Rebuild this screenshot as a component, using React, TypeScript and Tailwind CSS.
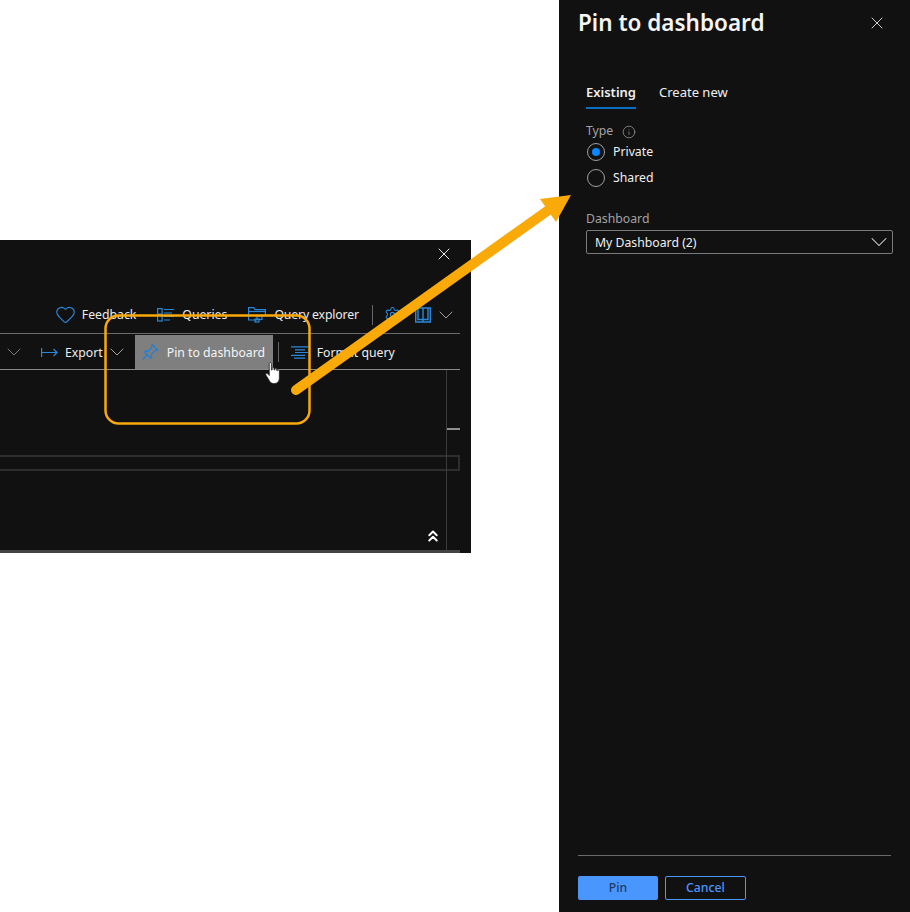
import { ChevronDown, ChevronsUp, Heart, Info, Settings, X } from "lucide-react"

const font = "font-['Noto_Sans','Open_Sans',sans-serif]"

const QueriesIcon = () => (
  <svg width="18" height="14" viewBox="0 0 18 14" fill="none" stroke="#2b88d8" strokeWidth="1.2">
    <rect x="0.6" y="0.6" width="4.5" height="5.5" />
    <rect x="0.6" y="7" width="4.5" height="6" />
    <path d="M7 1.5h10M7 5h8M7 8.500h10M7 12h6" />
  </svg>
)

const ExplorerIcon = () => (
  <svg width="18" height="16" viewBox="0 0 18 16" fill="none" stroke="#2b88d8" strokeWidth="1.2">
    <path d="M9 13H.6V.6h5l1.500 2h10.300v6" />
    <path d="M.6 4.500h16.800" />
    <rect x="9" y="9" width="5" height="3.500" />
    <rect x="7" y="12" width="4" height="3" />
  </svg>
)

const BookIcon = () => (
  <svg width="16" height="16" viewBox="0 0 16 16" fill="none" stroke="#2b88d8" strokeWidth="1.400">
    <path d="M.7 15V1h14.600v14zM8 1v14M3 1v11.500h10V1" />
  </svg>
)

const ExportIcon = () => (
  <svg width="17" height="9" viewBox="0 0 17 9" fill="none" stroke="#2b88d8" strokeWidth="1.200">
    <path d="M.6 0v9M1 4.500h15M12.500 1l3.600 3.500L12.500 8" />
  </svg>
)

const PinIcon = () => (
  <svg width="17" height="18" viewBox="0 0 17 18" fill="none" stroke="#2080d8" strokeWidth="1.300">
    <path d="M.8 16.800l4.700-5.300M10 1.500L15.500 7l-3 1-3 3v3l-1 1-6-6 1-1h3l3-3z" />
  </svg>
)

const FormatIcon = () => (
  <svg width="17" height="13" viewBox="0 0 17 13" fill="none" stroke="#2b88d8" strokeWidth="1.200">
    <path d="M0 .8h17M4 3.800h10M4 6.500h13M0 9.300h14M3 12.200h11" />
  </svg>
)

const HandCursor = () => (
  <svg width="17" height="23" viewBox="0 0 16 23" preserveAspectRatio="none" fill="#fff" stroke="#222" strokeWidth="0.800">
    <path d="M4 1.500c0-1.300 2-1.300 2 0V8l.8-.2V6.300c0-1 1.700-1 1.700 0v1.600l.8.100V7c0-1 1.700-1 1.700 0v1.500l.7.100c0-1 1.800-.9 1.800.2V16c0 3-1.500 5.500-4.500 5.500H8c-2 0-3-1-4-3L.8 13c-.7-1.300.9-2.300 1.800-1.200L4 13.500z" />
  </svg>
)

const Radio = ({ label, checked }: { label: string; checked?: boolean }) => (
  <label className="flex items-center gap-[8px] h-[26px] pl-px">
    <span className="w-[18px] h-[18px] rounded-full border border-[#a0a0a0] flex items-center justify-center">
      {checked && <span className="w-[8px] h-[8px] rounded-full bg-[#0a84ff]" />}
    </span>
    <span className="mt-[2px] text-[12.250px] text-[#f0f0f0]">{label}</span>
  </label>
)

const QueryWindow = () => (
  <div className={`relative w-[471px] h-[313px] bg-[#111111] text-white overflow-hidden flex flex-col ${font}`}>
    <div className="flex justify-end pt-[4px] pr-[17px] h-[60px]">
      <X size={20} strokeWidth={1.100} className="text-white" />
    </div>
    <div className="flex items-center justify-end h-[34px] w-[460px] pb-[4px] pr-[2px] text-[12.250px] text-[#ededed] border-b border-[#6a6a6a]">
      <Heart size={21} strokeWidth={1.300} className="text-[#2b88d8] mr-[6px]" />
      <span className="mr-[21px] mt-[2px]">Feedback</span>
      <QueriesIcon />
      <span className="ml-[7px] mr-[21px] mt-[2px]">Queries</span>
      <ExplorerIcon />
      <span className="ml-[8px] mr-[13px] mt-[2px] tracking-[-0.14px]">Query explorer</span>
      <span className="w-px h-[20px] bg-[#666] mr-[11px]" />
      <Settings size={17} strokeWidth={1.500} className="text-[#2b88d8] mr-[14px]" />
      <BookIcon />
      <ChevronDown size={24} strokeWidth={1} className="text-[#a0a0a0] ml-[3px]" />
    </div>
    <div className="flex items-center h-[36px] w-[460px] pt-px pl-[2px] text-[12.250px] text-[#ededed] border-b border-[#8a8a8a]">
      <ChevronDown size={24} strokeWidth={1} className="text-[#777]" />
      <span className="ml-[15px]"><ExportIcon /></span>
      <span className="ml-[7px] mt-[2px]">Export</span>
      <ChevronDown size={24} strokeWidth={1} className="text-[#a0a0a0] ml-[2px]" />
      <div className="flex items-center h-full w-[138px] ml-[6px] pl-[7px] bg-[#7f7f7f]">
        <PinIcon />
        <span className="ml-[8px] mt-[2px] text-[#f5f5f5] whitespace-nowrap">Pin to dashboard</span>
      </div>
      <span className="w-px h-[20px] bg-[#666] ml-[5px]" />
      <span className="ml-[12px]"><FormatIcon /></span>
      <span className="ml-[9px] mt-[2px]">Format query</span>
    </div>
    <div className="flex-1 flex flex-col relative w-[460px]">
      <div className="flex-1 relative pt-[58px]">
        <div className="ml-[446px] h-[2px] w-[14px] bg-[#8f8f8f]" />
        <div className="mt-[25px] h-[16px] border-2 border-[#2e2e2e] border-l-0" />
        <div className="absolute top-0 bottom-0 left-[446px] w-px bg-[#3c3c3c]" />
        <ChevronsUp size={18} strokeWidth={2.500} className="absolute left-[424px] top-[157px] text-white" />
      </div>
      <div className="h-[3px] bg-[#444]" />
    </div>
  </div>
)

const PinPanel = () => (
  <aside className={`w-[351px] h-[912px] shrink-0 bg-[#111111] text-white flex flex-col ${font}`}>
    <div className="flex items-center justify-between h-[46px] pl-[19px] pr-[23px]">
      <h1 className="text-[22.500px] font-semibold text-[#f5f5f5]">Pin to dashboard</h1>
      <X size={20} strokeWidth={1.100} className="text-[#e0e0e0]" />
    </div>
    <div className="flex-1 pl-[27px] pr-[17px]">
      <div className="flex gap-[23px] mt-[37px] text-[13px]">
        <span className="pb-[4px] font-semibold border-b-2 border-[#0a6fc2] text-[#f0f0f0]">Existing</span>
        <span className="text-[#f0f0f0]">Create new</span>
      </div>
      <div className="flex items-center gap-[9px] mt-[14px] h-[18px] text-[12.250px] text-[#a3a3a3]">
        Type
        <Info size={14} strokeWidth={1.200} />
      </div>
      <div className="-mt-[2px]">
        <Radio label="Private" checked />
        <Radio label="Shared" />
      </div>
      <div className="mt-[19px] text-[12.250px] text-[#a3a3a3]">Dashboard</div>
      <div className="mt-[2px] flex items-center justify-between h-[24px] pl-[8px] border border-[#7a7a7a] rounded-[2px] text-[12.250px] text-[#f0f0f0]">
        <span className="mt-[2px]">My Dashboard (2)</span>
        <ChevronDown size={28} strokeWidth={0.900} className="text-[#e0e0e0] -mr-px" />
      </div>
    </div>
    <div className="mx-[19px] mb-[12px] pt-[20px] border-t border-[#6a6a6a] flex gap-[7px] text-[12.250px] font-medium">
      <button className="w-[80px] h-[24px] rounded-[2px] bg-[#4a96ff] text-[#1f3a66]">Pin</button>
      <button className="w-[81px] h-[24px] rounded-[2px] border border-[#4a96ff] text-[#4a96ff]">Cancel</button>
    </div>
  </aside>
)

const Callout = () => (
  <svg className="absolute inset-0 pointer-events-none" width="910" height="912" viewBox="0 0 910 912" fill="none">
    <rect x="105.500" y="315.500" width="204" height="108" rx="13" stroke="#f9a90a" strokeWidth="2.500" />
    <path d="M296 390L550 209" stroke="#f9aa08" strokeWidth="10" strokeLinecap="round" />
    <path d="M571 195L540 199L556 222Z" fill="#f9aa08" />
  </svg>
)

const App = () => {
  return (
    <div className="relative w-[910px] h-[912px] bg-white overflow-hidden flex">
      <div className="flex-1 pt-[240px]">
        <QueryWindow />
      </div>
      <PinPanel />
      <Callout />
      <div className="absolute left-[265px] top-[362px]">
        <HandCursor />
      </div>
    </div>
  )
}

export default App
